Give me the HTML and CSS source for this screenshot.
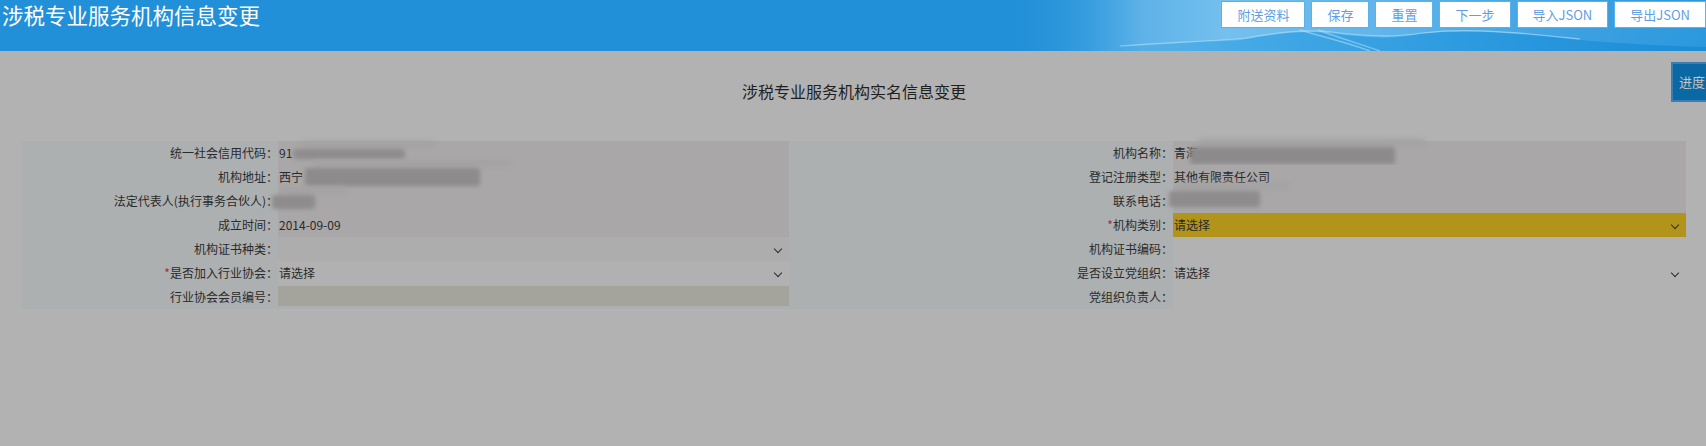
FILE: index.html
```html
<!DOCTYPE html>
<html lang="zh-CN">
<head>
  <meta charset="UTF-8" />
  <meta name="viewport" content="width=device-width, initial-scale=1" />
  <title>涉税专业服务机构信息变更</title>
  <link rel="stylesheet" href="styles.css">
</head>
<body>
  <header class="topbar">
    <svg class="topbar-wave" viewBox="0 0 706 51" preserveAspectRatio="none" aria-hidden="true">
      <defs>
        <linearGradient id="sky" x1="0" x2="1" y1="0" y2="0">
          <stop offset="0" stop-color="#2190d8" stop-opacity="0"/>
          <stop offset="0.2" stop-color="#5db2e8"/>
          <stop offset="0.32" stop-color="#74c0ee"/>
          <stop offset="0.55" stop-color="#5fb4ea"/>
          <stop offset="0.8" stop-color="#3ea2e2"/>
          <stop offset="1" stop-color="#2b98dd"/>
        </linearGradient>
        <linearGradient id="sea" x1="0" x2="1" y1="0" y2="0">
          <stop offset="0" stop-color="#3aa2e2" stop-opacity="0"/>
          <stop offset="0.25" stop-color="#44a9e6"/>
          <stop offset="0.6" stop-color="#2e9be0"/>
          <stop offset="1" stop-color="#1b8cd5"/>
        </linearGradient>
      </defs>
      <rect x="0" y="0" width="706" height="51" fill="url(#sky)"/>
      <path d="M90,51 C150,44 200,42 240,40 C275,34 300,30 330,33 C360,37 390,40 420,34 C470,28 520,34 580,40 C630,44 670,46 706,47 L706,51 Z" fill="url(#sea)"/>
      <path d="M120,46 C180,42 215,41 245,38 C280,32 305,29 332,32 C362,36 392,38 422,33 C470,27 522,33 580,39" fill="none" stroke="#9fd6f5" stroke-width="1.2" opacity="0.8"/>
      <path d="M300,30 C320,36 345,42 370,51 M318,30 C340,38 360,44 380,51" fill="none" stroke="#bfe4f8" stroke-width="1.5" opacity="0.5"/>
    </svg>
    <h1 class="topbar-title">涉税专业服务机构信息变更</h1>
    <div class="topbar-actions">
      <button class="btn">附送资料</button>
      <button class="btn">保存</button>
      <button class="btn">重置</button>
      <button class="btn">下一步</button>
      <button class="btn">导入JSON</button>
      <button class="btn">导出JSON</button>
    </div>
  </header>

  <main class="content">
    <h2 class="form-title">涉税专业服务机构实名信息变更</h2>

    <div class="form-grid">
      <div class="label">统一社会信用代码<span class="colon">：</span></div>
      <div class="value readonly">91<span class="mask mask-code"></span></div>
      <div class="label">机构名称<span class="colon">：</span></div>
      <div class="value readonly">青海<span class="mask mask-name"></span></div>

      <div class="label">机构地址<span class="colon">：</span></div>
      <div class="value readonly">西宁<span class="mask mask-addr"></span></div>
      <div class="label">登记注册类型<span class="colon">：</span></div>
      <div class="value readonly">其他有限责任公司</div>

      <div class="label">法定代表人(执行事务合伙人)<span class="colon">：</span></div>
      <div class="value readonly"><span class="mask mask-person"></span></div>
      <div class="label">联系电话<span class="colon">：</span></div>
      <div class="value readonly"><span class="mask mask-phone"></span></div>

      <div class="label">成立时间<span class="colon">：</span></div>
      <div class="value readonly">2014-09-09</div>
      <div class="label"><em class="req">*</em>机构类别<span class="colon">：</span></div>
      <div class="value select select-warn">请选择<i class="chevron"></i></div>

      <div class="label">机构证书种类<span class="colon">：</span></div>
      <div class="value select select-dim"><i class="chevron"></i></div>
      <div class="label">机构证书编码<span class="colon">：</span></div>
      <div class="value"></div>

      <div class="label"><em class="req">*</em>是否加入行业协会<span class="colon">：</span></div>
      <div class="value select">请选择<i class="chevron"></i></div>
      <div class="label">是否设立党组织<span class="colon">：</span></div>
      <div class="value select select-plain">请选择<i class="chevron"></i></div>

      <div class="label">行业协会会员编号<span class="colon">：</span></div>
      <div class="value"><span class="text-input"></span></div>
      <div class="label">党组织负责人<span class="colon">：</span></div>
      <div class="value"></div>
    </div>
  </main>

  <a class="progress-tab">进度</a>
</body>
</html>
```

FILE: styles.css
```css
html {
  background: #b2b2b2;
}
body {
  margin: 0;
  font-family: "Noto Sans CJK SC", "Microsoft YaHei", sans-serif;
  color: #2a2a2a;
  overflow: hidden;
}
.topbar {
  position: relative;
  height: 51px;
  background: #2190d8;
  display: flex;
  justify-content: space-between;
  align-items: flex-start;
}
.topbar-wave {
  position: absolute;
  left: 1000px;
  top: 0;
  width: 706px;
  height: 51px;
}
.topbar-title {
  position: relative;
  margin: 0 0 0 2px;
  font-size: 21.5px;
  font-weight: normal;
  line-height: 30px;
  color: #fff;
}
.topbar-actions {
  position: relative;
  display: flex;
  gap: 6px;
  margin-top: 1px;
}
.btn {
  height: 27px;
  padding: 0 15px;
  border: 1px solid #5cb0ec;
  background: #fff;
  color: #5f9ee4;
  font-family: inherit;
  font-size: 13px;
  line-height: 25px;
  cursor: pointer;
}
.btn:last-child {
  min-width: 90px;
}
.content {
  padding: 28px 20px 0 22px;
}
.form-title {
  margin: 0 0 38px;
  text-align: center;
  font-size: 16px;
  font-weight: normal;
  line-height: 24px;
  color: #1f1f1f;
}
.form-grid {
  display: grid;
  grid-template-columns: 256px 511px 384px 513px;
  grid-auto-rows: 24px;
  background: #adb0b1;
  font-size: 12px;
  line-height: 24px;
}
.label {
  text-align: right;
  white-space: nowrap;
}
.colon {
  font-family: "Noto Sans CJK JP", sans-serif;
}
.req {
  font-style: normal;
  color: #b02a24;
}
.value {
  position: relative;
  padding-left: 1px;
  white-space: nowrap;
  background: #b2b2b2;
}
.form-grid > .value:nth-child(4n+2) {
  background: #adb0b1;
}
.value.readonly,
.form-grid > .value.readonly {
  background: #a9a7a7;
}
.form-grid > .value.select {
  background: #b1b1b1;
}
.form-grid > .value.select-dim {
  background: #adadad;
}
.form-grid > .value.select-plain {
  background: #b2b2b2;
}
.form-grid > .value.select-warn {
  background: #b3941a;
}
.chevron {
  position: absolute;
  right: 8px;
  top: 9px;
  width: 5px;
  height: 5px;
  border-right: 1.5px solid #2c2c2c;
  border-bottom: 1.5px solid #2c2c2c;
  transform: rotate(45deg);
}
.text-input {
  display: block;
  margin: 1px 0 0 -1px;
  height: 20px;
  background: #a4a49d;
}
.mask {
  position: absolute;
  background: #8e8c8c;
  filter: blur(2px);
  border-radius: 3px;
}
.mask::before {
  content: "";
  position: absolute;
  left: 8px;
  right: -30px;
  top: -8px;
  height: 6px;
  background: #a4a2a2;
  border-radius: 6px;
}
.mask-code {
  left: 15px;
  top: 8px;
  width: 112px;
  height: 10px;
}
.mask-addr {
  left: 27px;
  top: 3px;
  width: 175px;
  height: 18px;
  background: #8d8b8b;
}
.mask-person {
  left: -6px;
  top: 6px;
  width: 43px;
  height: 14px;
}
.mask-phone {
  left: -4px;
  top: 2px;
  width: 91px;
  height: 16px;
}
.mask-name {
  left: 17px;
  top: 6px;
  width: 205px;
  height: 17px;
  background: #8c8a8a;
}
.progress-tab {
  position: absolute;
  top: 62px;
  right: 0;
  width: 27px;
  height: 36px;
  padding-left: 6px;
  border: 2px solid #3b7db5;
  border-right: none;
  background: #0a69a3;
  color: #c4c4c4;
  font-size: 13px;
  line-height: 36px;
  white-space: nowrap;
  overflow: hidden;
}
```
